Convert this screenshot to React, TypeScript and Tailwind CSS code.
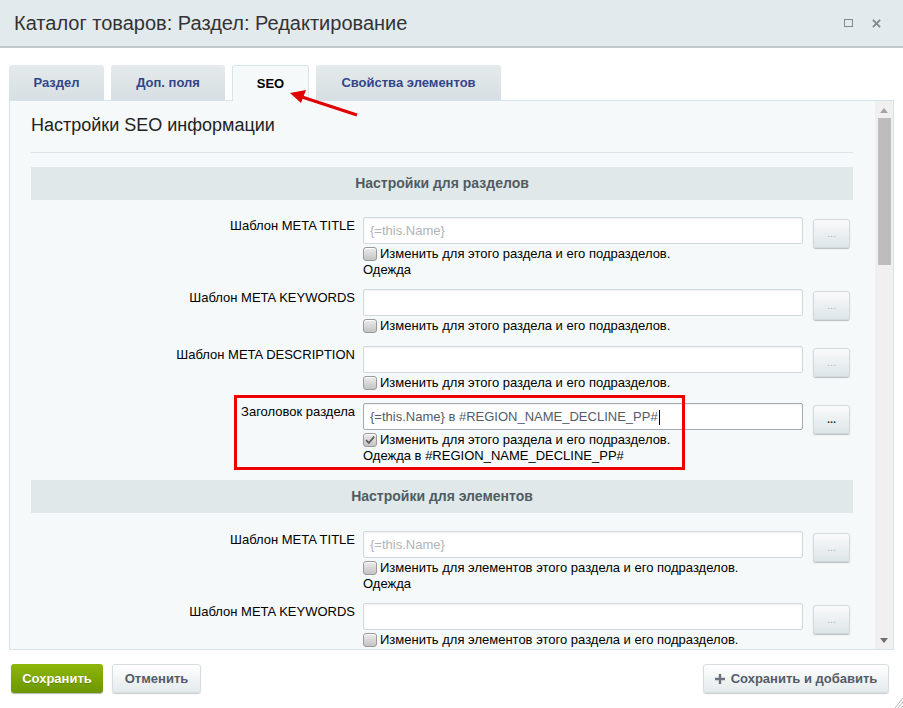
import React from "react";

const font = { fontFamily: '"Liberation Sans", Arial, sans-serif' } as const;

function Checkbox({ checked }: { checked?: boolean }) {
  return (
    <span className="relative inline-block w-[14px] h-[14px] shrink-0 rounded-[3px] border border-[#9a9a9a] bg-gradient-to-b from-[#ececec] to-[#c4c4c4] shadow-[inset_0_1px_0_#fff]">
      {checked && (
        <svg viewBox="0 0 14 14" className="absolute left-[-1px] top-[-1px] w-[14px] h-[14px]">
          <path d="M3 7.2 L5.8 10 L11.2 3.6" fill="none" stroke="#5f5f5f" strokeWidth="1.8" />
        </svg>
      )}
    </span>
  );
}

function DotsButton({ dark }: { dark?: boolean }) {
  return (
    <div
      className={`ml-[10px] mt-[2px] w-[37px] h-[29px] shrink-0 rounded-[3px] border border-[#d3dadd] bg-gradient-to-b from-[#fafbfb] to-[#dde5e8] shadow-[0_1px_1px_rgba(0,0,0,0.25)] flex items-center justify-center text-[11px] leading-none ${dark ? "text-[#333] font-bold" : "text-[#b0b6b9]"}`}
    >
      ...
    </div>
  );
}

type RowProps = {
  label: string;
  value?: string;
  placeholder?: string;
  check: string;
  extra?: string;
  checked?: boolean;
  focused?: boolean;
  highlight?: boolean;
};

function Row({ label, value, placeholder, check, extra, checked, focused, highlight }: RowProps) {
  return (
    <div className="relative flex items-start">
      {highlight && (
        <div className="absolute left-[203px] top-[-8px] w-[451px] h-[75px] border-[3px] border-[#ee0000] pointer-events-none" />
      )}
      <div className="w-[332px] pr-[8px] text-right text-[13px] leading-[15px] text-[#000] pt-[1px]">{label}</div>
      <div className="w-[440px] flex flex-col">
        <div
          className={`h-[27px] rounded-[2px] border bg-white flex items-center px-[6px] text-[13px] shadow-[inset_0_1px_2px_rgba(0,0,0,0.06)] ${focused ? "border-[#a4abaf]" : "border-[#d2d9dc]"}`}
        >
          {value ? (
            <span className="text-[#535c69]">
              {value}
              <span className="inline-block w-[1px] h-[15px] bg-[#000] align-middle ml-[1px]" />
            </span>
          ) : (
            <span className="text-[#b0b4b7]">{placeholder}</span>
          )}
        </div>
        <div className="mt-[2px] flex items-center h-[16px] text-[13px] leading-[16px] text-[#000]">
          <Checkbox checked={checked} />
          <span className="ml-[3px]">{check}</span>
        </div>
        {extra && <div className="text-[13px] leading-[15px] text-[#000]">{extra}</div>}
      </div>
      <DotsButton dark={focused} />
    </div>
  );
}

function SectionHeader({ title }: { title: string }) {
  return (
    <div className="h-[33px] bg-[#e1e8ea] flex items-center justify-center text-[14px] font-bold text-[#4f5d63]">
      {title}
    </div>
  );
}

function Tab({ label, active, w }: { label: string; active?: boolean; w: string }) {
  return (
    <div
      className={`${w} flex items-center justify-center text-[13px] font-bold rounded-t-[3px] ${
        active
          ? "h-[36px] mb-[-1px] relative z-10 bg-[#f5f9fa] border border-b-0 border-[#d6e3ea] text-[#000]"
          : "h-[35px] bg-gradient-to-b from-[#e5eaec] to-[#d6dfe2] text-[#33458a]"
      }`}
    >
      {label}
    </div>
  );
}

export default function App() {
  const secCheck = "Изменить для этого раздела и его подразделов.";
  const elCheck = "Изменить для элементов этого раздела и его подразделов.";
  return (
    <div className="relative w-[903px] h-[708px] bg-white overflow-hidden" style={font}>
      {/* Title bar */}
      <div className="h-[48px] bg-[#e3eaed] border-b-2 border-[#c3c9cc] flex items-center pl-[14px] pr-[22px]">
        <div className="flex-1 text-[20px] text-[#333] leading-none">Каталог товаров: Раздел: Редактирование</div>
        <div className="flex items-center gap-[19px]">
          <span className="inline-block w-[9px] h-[8px] border-[1.5px] border-[#7d8a92]" />
          <svg viewBox="0 0 10 10" className="w-[9px] h-[9px]">
            <path d="M1 1 L9 9 M9 1 L1 9" stroke="#7d8a92" strokeWidth="2" />
          </svg>
        </div>
      </div>

      {/* Tabs */}
      <div className="mt-[17px] pl-[9px] flex items-end gap-[7px]">
        <Tab label="Раздел" w="w-[95px]" />
        <Tab label="Доп. поля" w="w-[114px]" />
        <Tab label="SEO" active w="w-[77px]" />
        <Tab label="Свойства элементов" w="w-[185px]" />
      </div>

      {/* Panel */}
      <div className="ml-[9px] w-[885px] h-[550px] border border-[#d6e3ea] bg-[#f5f9fa] flex">
        <div className="flex-1 overflow-hidden pl-[21px] pr-[22px]">
          <div className="pt-[13px] text-[18px] leading-[22px] text-[#222]">Настройки SEO информации</div>
          <div className="mt-[16px] h-[1px] bg-[#dde2e4]" />
          <div className="mt-[14px]">
            <SectionHeader title="Настройки для разделов" />
            <div className="pt-[17px] pb-[17px] flex flex-col gap-[12px]">
              <Row label="Шаблон META TITLE" placeholder="{=this.Name}" check={secCheck} extra="Одежда" />
              <Row label="Шаблон META KEYWORDS" check={secCheck} />
              <Row label="Шаблон META DESCRIPTION" check={secCheck} />
              <Row
                label="Заголовок раздела"
                value="{=this.Name} в #REGION_NAME_DECLINE_PP#"
                check={secCheck}
                extra="Одежда в #REGION_NAME_DECLINE_PP#"
                checked
                focused
                highlight
              />
            </div>
            <SectionHeader title="Настройки для элементов" />
            <div className="pt-[18px] flex flex-col gap-[12px]">
              <Row label="Шаблон META TITLE" placeholder="{=this.Name}" check={elCheck} extra="Одежда" />
              <Row label="Шаблон META KEYWORDS" check={elCheck} />
            </div>
          </div>
        </div>
        {/* Scrollbar */}
        <div className="w-[18px] bg-[#f0f0f0] flex flex-col items-center">
          <svg viewBox="0 0 8 5" className="mt-[7px] w-[8px] h-[5px]">
            <path d="M0 5 L4 0 L8 5 Z" fill="#a3a3a3" />
          </svg>
          <div className="mt-[5px] w-[13px] h-[147px] bg-[#bdbdbd]" />
          <div className="flex-1" />
          <svg viewBox="0 0 8 5" className="mb-[6px] w-[8px] h-[5px]">
            <path d="M0 0 L8 0 L4 5 Z" fill="#6f6f6f" />
          </svg>
        </div>
      </div>

      {/* Footer */}
      <div className="mt-[14px] pl-[11px] pr-[14px] flex items-center">
        <div className="w-[92px] h-[29px] rounded-[3px] bg-gradient-to-b from-[#8fb70a] to-[#6b9600] shadow-[0_1px_1px_rgba(0,0,0,0.3)] flex items-center justify-center text-[13px] font-bold text-white [text-shadow:0_1px_0_rgba(0,0,0,0.2)]">
          Сохранить
        </div>
        <div className="ml-[9px] w-[89px] h-[29px] rounded-[3px] border border-[#d6dde0] bg-gradient-to-b from-[#ffffff] to-[#e4eaec] shadow-[0_1px_1px_rgba(0,0,0,0.2)] flex items-center justify-center text-[13px] font-bold text-[#535c69]">
          Отменить
        </div>
        <div className="flex-1" />
        <div className="w-[186px] h-[29px] rounded-[3px] border border-[#d6dde0] bg-gradient-to-b from-[#ffffff] to-[#e4eaec] shadow-[0_1px_1px_rgba(0,0,0,0.2)] flex items-center justify-center gap-[6px] text-[13px] font-bold text-[#535c69]">
          <svg viewBox="0 0 10 10" className="w-[10px] h-[10px]">
            <path d="M5 0 V10 M0 5 H10" stroke="#6b737c" strokeWidth="2.4" />
          </svg>
          Сохранить и добавить
        </div>
      </div>

      {/* Red arrow annotation */}
      <svg className="absolute left-0 top-0 z-20 pointer-events-none" width="903" height="708">
        <line x1="357" y1="115" x2="302" y2="97" stroke="#e00000" strokeWidth="3" />
        <path d="M290 93 L306 90 L301 103 Z" fill="#e00000" />
      </svg>

      {/* Resize grip */}
      <svg className="absolute right-0 bottom-0 pointer-events-none" width="10" height="12" viewBox="0 0 10 12">
        <path d="M2 12 L10 2 M5 12 L10 6 M8 12 L10 10" stroke="#b5b5b5" strokeWidth="1" />
      </svg>
    </div>
  );
}
